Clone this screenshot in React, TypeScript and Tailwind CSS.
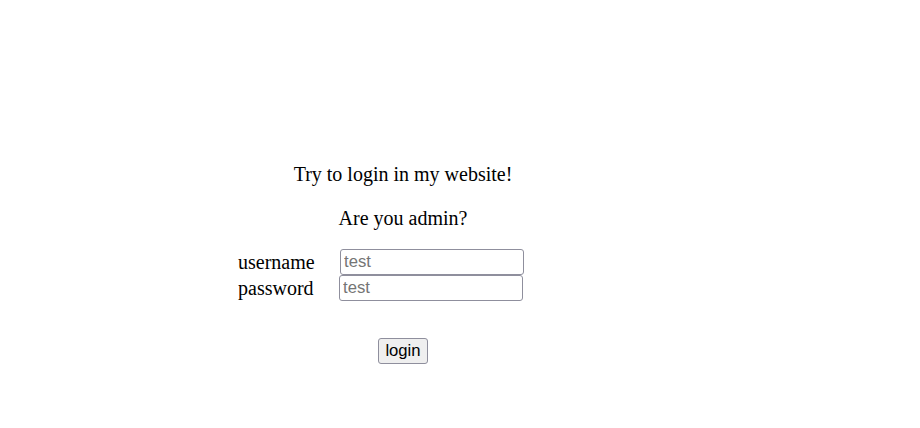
export default function App() {
  return (
    <div className="w-[920px] h-[428px] bg-white text-black" style={{ fontFamily: '"Liberation Serif", serif' }}>
      <div className="pt-[163px] pl-[238px]">
        <div className="w-[330px] flex flex-col items-center text-[20px] leading-[23px]">
          <p>Try to login in my website!</p>
          <p className="mt-[21px]">Are you admin?</p>
        </div>
        <div className="mt-[19px] flex flex-col text-[20px] leading-[23px]">
          <div className="flex items-end h-[26px]">
            <span className="w-[102px] pb-[1px]">username</span>
            <input
              placeholder="test"
              className="w-[184px] h-[26px] border border-[#8f8f9d] rounded-[3px] px-[3px] text-[16.67px] placeholder:text-[#757575] outline-none"
              style={{ fontFamily: '"Liberation Sans", Arial, sans-serif' }}
            />
          </div>
          <div className="flex items-end h-[26px]">
            <span className="w-[101px] pb-[1px]">password</span>
            <input
              placeholder="test"
              className="w-[184px] h-[26px] border border-[#8f8f9d] rounded-[3px] px-[3px] text-[16.67px] placeholder:text-[#757575] outline-none"
              style={{ fontFamily: '"Liberation Sans", Arial, sans-serif' }}
            />
          </div>
        </div>
        <div className="w-[330px] flex justify-center mt-[37px]">
          <button
            className="w-[50px] h-[26px] bg-[#efefef] border border-[#8f8f9d] rounded-[3px] text-[16.67px] leading-none"
            style={{ fontFamily: '"Liberation Sans", Arial, sans-serif' }}
          >
            login
          </button>
        </div>
      </div>
    </div>
  );
}
